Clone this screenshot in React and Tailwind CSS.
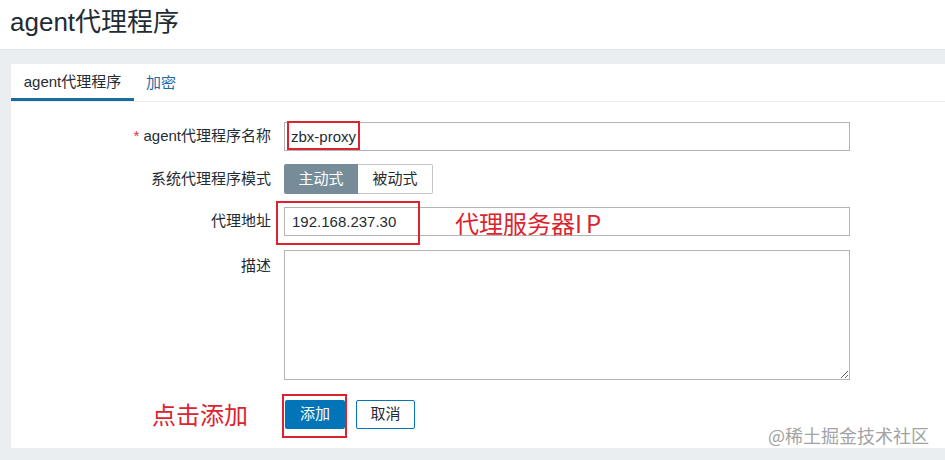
import React from 'react';

const font = { fontFamily: '"Liberation Sans", Arial, "Noto Sans CJK SC", sans-serif' };
const cjk = { fontFamily: '"Noto Sans CJK SC", sans-serif' };

function Row({ label, required, children, className = 'items-center', labelClass = '' }) {
  return (
    <div className={`flex ${className}`}>
      <div className={`w-[260px] shrink-0 text-right text-[15px] text-[#1f2c33] ${labelClass}`}>
        {required && <span className="mr-1 text-[#e33734]">*</span>}
        {label}
      </div>
      <div className="ml-[13px]">{children}</div>
    </div>
  );
}

export default function App() {
  return (
    <div className="h-[460px] w-[945px] overflow-hidden bg-[#ebeef0]" style={font}>
      {/* Header */}
      <div className="h-[50px] border-b border-[#dfe4e7] bg-white pl-[10px] pt-[4px]">
        <h1 className="text-[26px] leading-[36px] text-[#1f2c33]">agent代理程序</h1>
      </div>

      {/* Card */}
      <div className="relative ml-[11px] mt-[14px] h-[384px] bg-white">
        {/* Tabs */}
        <div className="flex h-[38px] border-b border-[#ebeef0]">
          <div className="flex w-[123px] items-center justify-center border-b-[3px] border-[#1a6c9c] pt-[2px] text-[15px] text-[#1f2c33]">
            agent代理程序
          </div>
          <div className="flex items-center pl-[12px] pt-[1px] text-[15px] text-[#1f6aa5]">加密</div>
        </div>

        {/* Form */}
        <div className="flex flex-col pt-[20px]">
          <Row label="agent代理程序名称" required>
            <div className="relative">
              <input
                readOnly
                value="zbx-proxy"
                className="block h-[29px] w-[566px] border border-[#b3b3b3] px-[6px] text-[15px] text-[#1f2c33] outline-none"
                style={font}
              />
              <div className="pointer-events-none absolute left-[3px] top-[-1px] h-[29px] w-[73px] border-2 border-[#dc2430]" />
            </div>
          </Row>

          <div className="mt-[13px]">
            <Row label="系统代理程序模式">
              <div className="flex h-[30px] text-[15px]">
                <div className="flex w-[74px] items-center justify-center rounded-l-[2px] bg-[#768d99] text-white">主动式</div>
                <div className="flex w-[75px] items-center justify-center rounded-r-[2px] border border-l-0 border-[#c5c5c5] bg-white text-[#1f2c33]">
                  被动式
                </div>
              </div>
            </Row>
          </div>

          <div className="mt-[13px]">
            <Row label="代理地址">
              <div className="relative">
                <input
                  readOnly
                  value="192.168.237.30"
                  className="block h-[29px] w-[566px] border border-[#b3b3b3] px-[7px] text-[15px] text-[#1f2c33] outline-none"
                  style={font}
                />
                <div className="pointer-events-none absolute left-[-8px] top-[-6px] h-[44px] w-[144px] border-2 border-[#dc2430]" />
                <div className="pointer-events-none absolute left-[171px] top-[1px] text-[24px] leading-[30px] text-[#dc2430]" style={cjk}>
                  代理服务器<span className="tracking-[4px]">IP</span>
                </div>
              </div>
            </Row>
          </div>

          <div className="mt-[14px]">
            <Row label="描述" className="items-start" labelClass="pt-[5px]">
              <textarea
                readOnly
                className="block h-[130px] w-[566px] border border-[#b3b3b3] outline-none"
              />
            </Row>
          </div>

          <div className="mt-[19px] flex items-center">
            <div className="w-[237px] shrink-0 text-right text-[24px] leading-[30px] text-[#dc2430]" style={cjk}>
              点击添加
            </div>
            <div className="ml-[37px] flex gap-[11px]">
              <div className="relative">
                <button className="block h-[29px] w-[60px] rounded-[2px] bg-[#0275b8] text-[15px] text-white" style={font}>添加</button>
                <div className="pointer-events-none absolute left-[-3px] top-[-6px] h-[44px] w-[65px] border-2 border-[#dc2430]" />
              </div>
              <button className="block h-[29px] w-[59px] rounded-[2px] border border-[#0275b8] bg-white text-[15px] text-[#1f2c33]" style={font}>取消</button>
            </div>
          </div>
        </div>

        {/* watermark */}
        <div className="absolute left-[757px] top-[358px] text-[18px] text-[#a3a3a3]" style={cjk}>
          @稀土掘金技术社区
        </div>
      </div>
    </div>
  );
}
